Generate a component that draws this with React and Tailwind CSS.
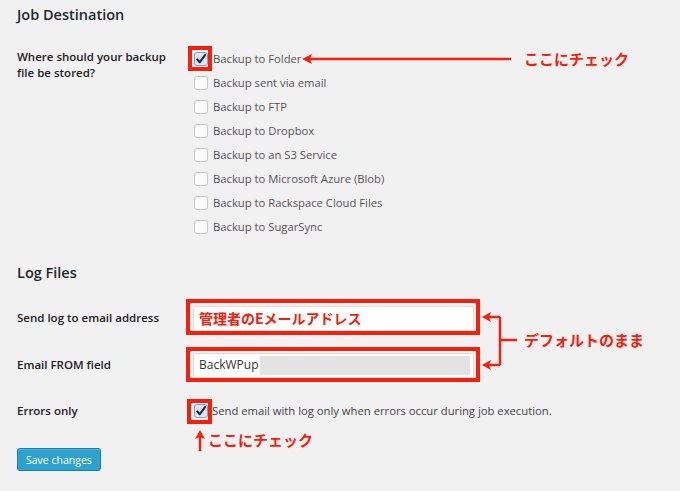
import React from 'react';

const RED = '#f5200c';

const Box = ({ checked }) => (
  <span
    className={`inline-flex items-center justify-center w-[14px] h-[14px] rounded-[3px] border shrink-0 ${
      checked ? 'border-[#8aa0bd] bg-[#dbe5f1]' : 'border-[#c3c6c9] bg-[#fbfbfb]'
    }`}
  >
    {checked && (
      <svg width="12" height="12" viewBox="0 0 12 12">
        <path d="M2.2 6.4 L4.8 9.2 L10.2 1.8" fill="none" stroke="#16233f" strokeWidth="2" strokeLinecap="round" strokeLinejoin="round" />
      </svg>
    )}
  </span>
);

const destinations = [
  'Backup to Folder',
  'Backup sent via email',
  'Backup to FTP',
  'Backup to Dropbox',
  'Backup to an S3 Service',
  'Backup to Microsoft Azure (Blob)',
  'Backup to Rackspace Cloud Files',
  'Backup to SugarSync',
];

const jp = { fontFamily: '"Noto Sans CJK JP", "Open Sans", sans-serif' };

export default function App() {
  return (
    <div
      className="relative w-[680px] h-[491px] overflow-hidden bg-[#f1f1f1] text-[#444]"
      style={{ fontFamily: '"Open Sans", "Noto Sans CJK JP", sans-serif' }}
    >
      <div className="pl-[17px]">
        <h2 className="pt-[5px] h-[22px] text-[14.5px] leading-[20px] font-semibold text-[#23282d]">Job Destination</h2>

        <div className="flex mt-[25px]">
          <div className="w-[177px] pt-[2px] text-[11.5px] leading-[16px] font-semibold text-[#222]">
            Where should your backup
            <br />
            file be stored?
          </div>
          <div className="flex flex-col">
            {destinations.map((d, i) => (
              <label key={d} className="flex items-center h-[24px] gap-[5px] text-[11.25px] text-[#555]">
                <Box checked={i === 0} />
                <span>{d}</span>
              </label>
            ))}
          </div>
        </div>

        <h2 className="mt-[24px] h-[22px] text-[14.5px] leading-[20px] font-semibold text-[#23282d]">Log Files</h2>

        <div className="flex items-center mt-[20px] h-[26px]">
          <div className="w-[176px] text-[11.5px] font-semibold text-[#222]">Send log to email address</div>
          <div className="w-[281px] h-[25px] bg-white border border-[#ddd] flex items-center px-[5px]">
            <span className="text-[14px] font-bold" style={{ ...jp, color: RED }}>管理者のEメールアドレス</span>
          </div>
        </div>

        <div className="flex items-center mt-[21px] h-[26px]">
          <div className="w-[176px] text-[11.5px] font-semibold text-[#222]">Email FROM field</div>
          <div className="w-[281px] h-[25px] bg-white border border-[#ddd] flex items-center pl-[5px] pr-[3px]">
            <span className="text-[12px] text-[#333]">BackWPup</span>
            <span className="flex-1 h-[19px] ml-[2px] bg-[#e3e3e3]" />
          </div>
        </div>

        <div className="flex items-center mt-[21px] h-[24px]">
          <div className="w-[177px] text-[11.5px] font-semibold text-[#222]">Errors only</div>
          <Box checked />
          <span className="ml-[4px] text-[11.25px] text-[#444]">Send email with log only when errors occur during job execution.</span>
        </div>

        <button className="mt-[25px] h-[23px] px-[8px] rounded-[3px] bg-[#2ea2cc] border border-[#0f83b0] text-white text-[10.5px] leading-[20px] shadow-[inset_0_1px_0_rgba(120,200,230,0.5)]">
          Save changes
        </button>
      </div>

      {/* annotations */}
      <div className="absolute left-[188px] top-[46px] w-[24px] h-[25px] border-[4px]" style={{ borderColor: RED }} />
      <svg className="absolute left-[300px] top-[52px]" width="212" height="14">
        <line x1="8" y1="7" x2="211" y2="7" stroke={RED} strokeWidth="2.5" />
        <path d="M2 7 L12 2 L10 7 L12 12 Z" fill={RED} />
      </svg>
      <div className="absolute left-[524px] top-[48px] text-[15px] font-bold leading-[22px]" style={{ ...jp, color: RED }}>
        ここにチェック
      </div>

      <div className="absolute left-[186px] top-[299px] w-[294px] h-[36px] border-[4px]" style={{ borderColor: RED }} />
      <div className="absolute left-[186px] top-[347px] w-[294px] h-[35px] border-[4px]" style={{ borderColor: RED }} />
      <svg className="absolute left-[481px] top-[308px]" width="40" height="66">
        <path d="M19 9 L19 57 M5 9 L19 9 M5 57 L19 57 M19 32 L36 32" fill="none" stroke={RED} strokeWidth="2.5" />
        <path d="M1 9 L10 4 L8 9 L10 14 Z" fill={RED} />
        <path d="M1 57 L10 52 L8 57 L10 62 Z" fill={RED} />
      </svg>
      <div className="absolute left-[524px] top-[329px] text-[15px] font-bold leading-[22px]" style={{ ...jp, color: RED }}>
        デフォルトのまま
      </div>

      <div className="absolute left-[187px] top-[399px] w-[25px] h-[25px] border-[4px]" style={{ borderColor: RED }} />
      <svg className="absolute left-[194px] top-[430px]" width="12" height="22">
        <line x1="6" y1="5" x2="6" y2="21" stroke={RED} strokeWidth="2.5" />
        <path d="M6 0 L11 9 L6 7 L1 9 Z" fill={RED} />
      </svg>
      <div className="absolute left-[208px] top-[429px] text-[15px] font-bold leading-[22px]" style={{ ...jp, color: RED }}>
        ここにチェック
      </div>
    </div>
  );
}
